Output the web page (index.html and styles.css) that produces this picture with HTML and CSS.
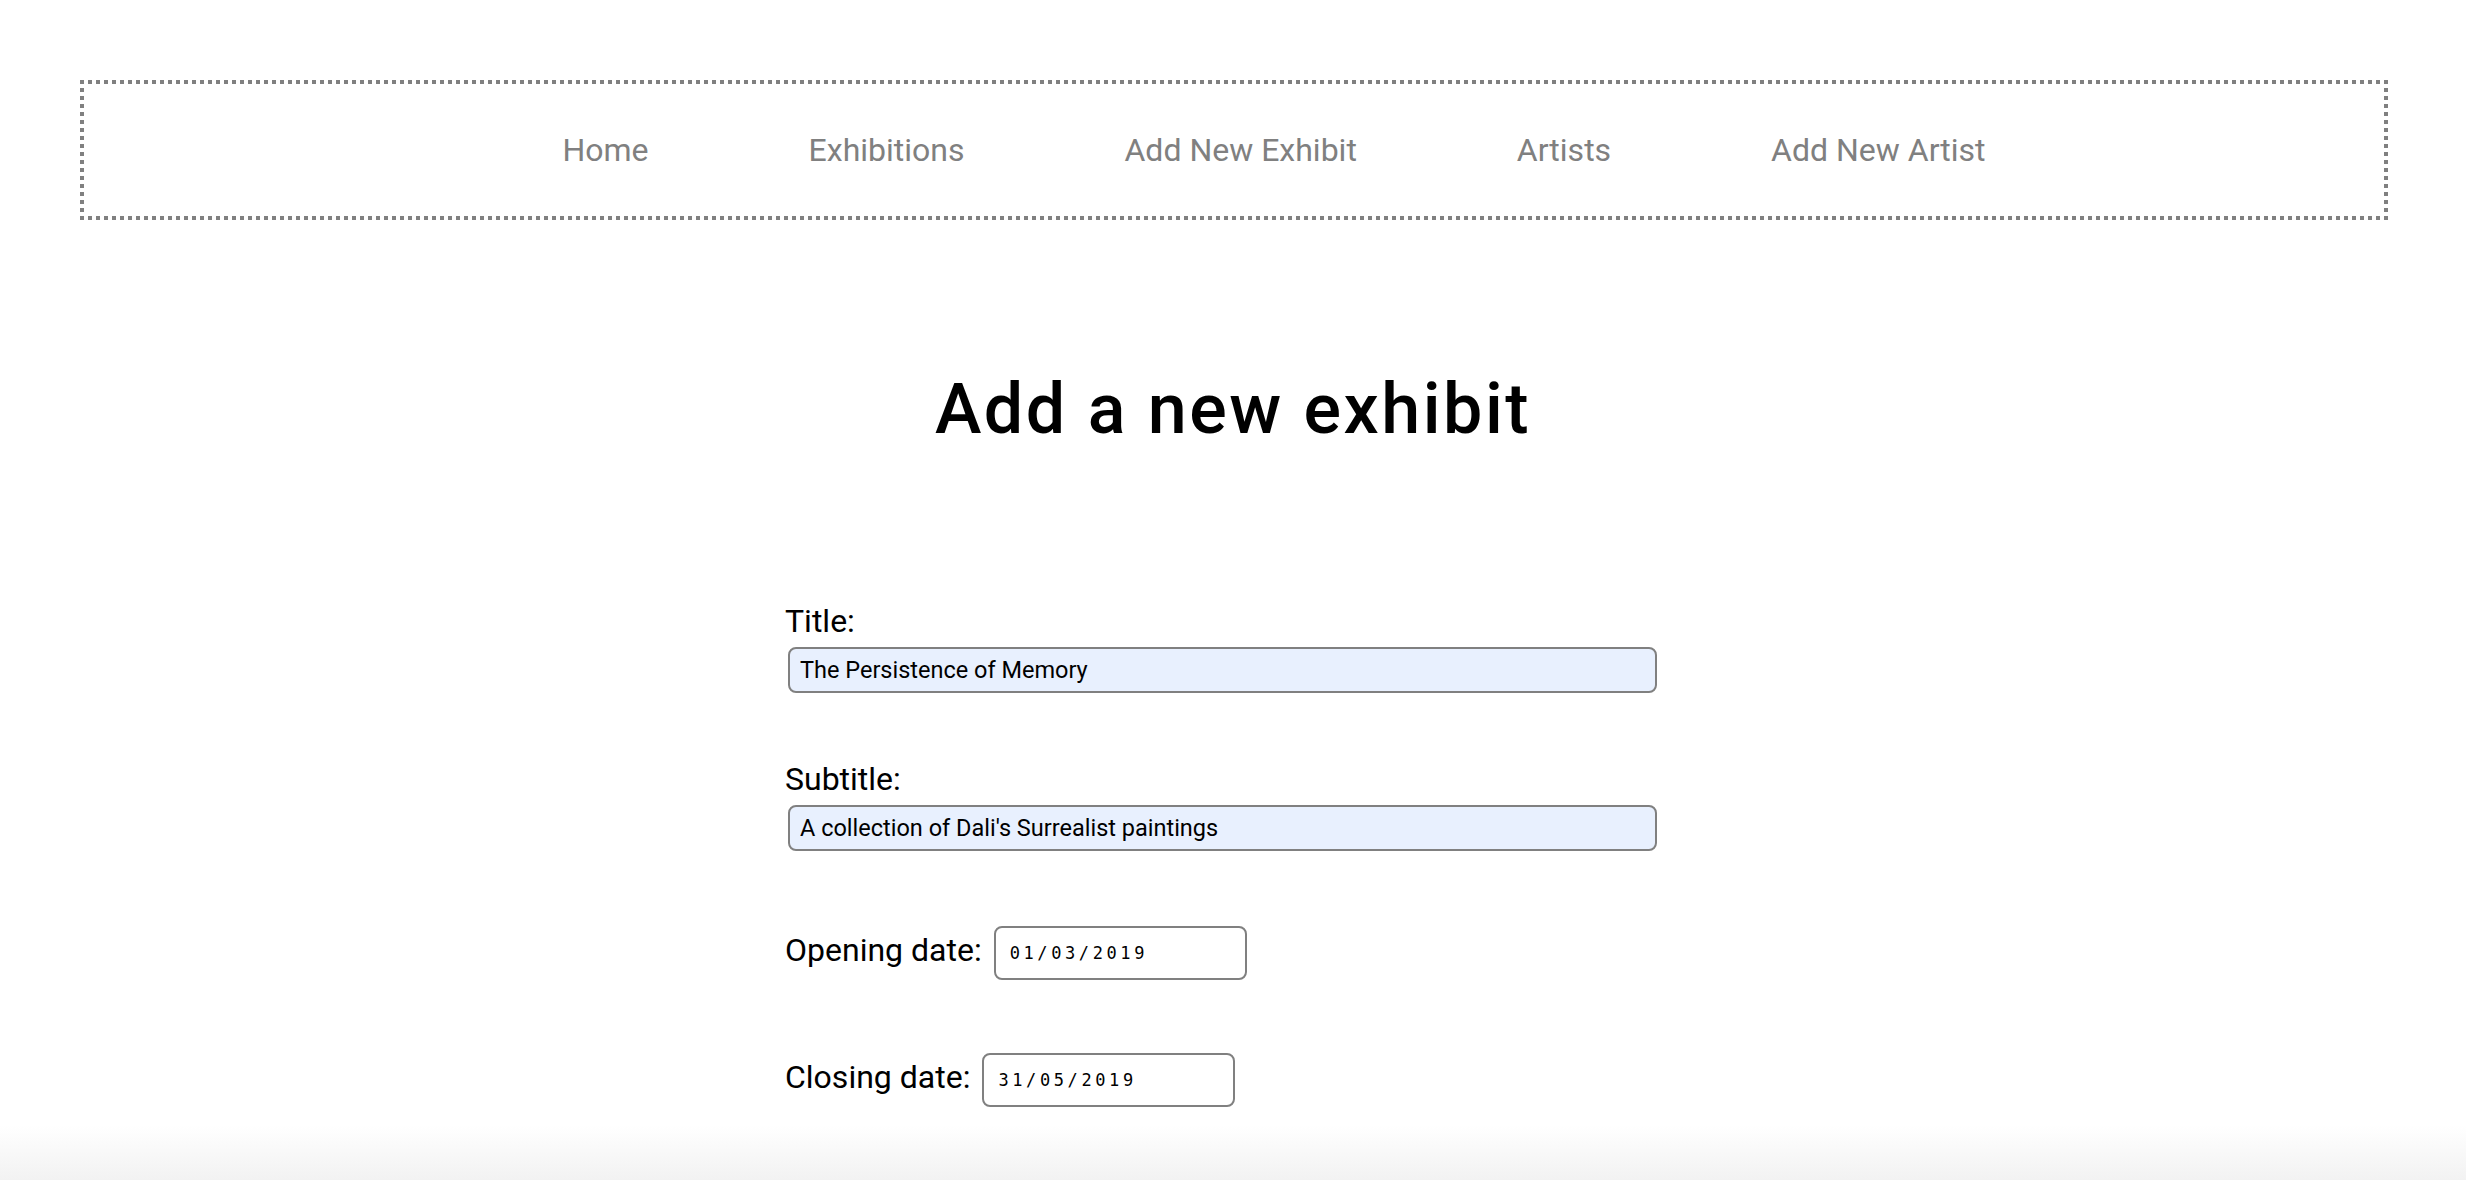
FILE: index.html
```html
<!DOCTYPE html>
<html lang="en">
<head>
<meta charset="utf-8">
<title>Add a new exhibit</title>
<link rel="stylesheet" href="styles.css">
</head>
<body>
<nav class="nav">
  <ul class="nav-list">
    <li><a class="nav-link" href="#">Home</a></li>
    <li><a class="nav-link" href="#">Exhibitions</a></li>
    <li><a class="nav-link" href="#">Add New Exhibit</a></li>
    <li><a class="nav-link" href="#">Artists</a></li>
    <li><a class="nav-link" href="#">Add New Artist</a></li>
  </ul>
</nav>
<main class="main">
  <h1 class="page-title">Add a new exhibit</h1>
  <form class="exhibit-form">
    <div class="field">
      <label class="label" for="title">Title:</label>
      <input class="text-input" id="title" type="text" value="The Persistence of Memory">
    </div>
    <div class="field field-second">
      <label class="label" for="subtitle">Subtitle:</label>
      <input class="text-input" id="subtitle" type="text" value="A collection of Dali's Surrealist paintings">
    </div>
    <div class="date-row date-row-open">
      <label class="label" for="open">Opening date:</label>
      <input class="date-input" id="open" type="text" value="01/03/2019">
    </div>
    <div class="date-row date-row-close">
      <label class="label" for="close">Closing date:</label>
      <input class="date-input" id="close" type="text" value="31/05/2019">
    </div>
  </form>
</main>
</body>
</html>
```

FILE: styles.css
```css
html {
  height: 100%;
  background: linear-gradient(to bottom, #ffffff 0, #ffffff 1125px, #f2f2f2 1180px);
}
body {
  margin: 0;
  font-family: Roboto, "Liberation Sans", sans-serif;
  color: #000;
}
.nav {
  margin: 80px 78px 0 80px;
  height: 140px;
  box-sizing: border-box;
  padding: 4px;
  display: flex;
  align-items: center;
  justify-content: center;
  background-image:
    repeating-linear-gradient(to right, #808080 0 4px, transparent 4px 8px),
    repeating-linear-gradient(to right, #808080 0 4px, transparent 4px 8px),
    repeating-linear-gradient(to bottom, #808080 0 4px, transparent 4px 8px),
    repeating-linear-gradient(to bottom, #808080 0 4px, transparent 4px 8px);
  background-size: 100% 4px, 100% 4px, 4px 100%, 4px 100%;
  background-position: left top, left bottom, left top, right top;
  background-repeat: no-repeat;
}
.nav-list {
  list-style: none;
  margin: 0;
  padding: 0 0 0 80px;
  display: flex;
  gap: 160px;
}
.nav-link {
  color: #808080;
  text-decoration: none;
  font-size: 32px;
}
.main {
  display: flex;
  flex-direction: column;
  align-items: center;
}
.page-title {
  margin: 148px 0 0 0;
  font-size: 70px;
  font-weight: 500;
  letter-spacing: 2.5px;
  line-height: 82px;
}
.exhibit-form {
  width: 896px;
  margin: 153px 0 0 0;
}
.label {
  display: block;
  font-size: 32px;
  line-height: 37px;
}
.field-second {
  margin-top: 68px;
}
.text-input {
  display: block;
  box-sizing: border-box;
  width: 869px;
  height: 46px;
  margin: 7px 0 0 3px;
  padding: 0 10px;
  border: 2px solid #808080;
  border-radius: 8px;
  background: #e8f0fe;
  font-family: Roboto, "Liberation Sans", sans-serif;
  font-size: 23.5px;
  color: #000;
}
.date-row {
  display: flex;
  align-items: center;
  gap: 12px;
}
.date-row .label {
  display: inline;
  margin-bottom: 6px;
}
.date-row-open {
  margin-top: 75px;
}
.date-row-close {
  margin-top: 73px;
}
.date-input {
  box-sizing: border-box;
  width: 253px;
  height: 54px;
  margin: 0;
  padding: 0 0 0 14px;
  border: 2px solid #808080;
  border-radius: 8px;
  background: #fff;
  font-family: "DejaVu Sans Mono", monospace;
  font-size: 17px;
  letter-spacing: 3.6px;
  color: #000;
}
```
